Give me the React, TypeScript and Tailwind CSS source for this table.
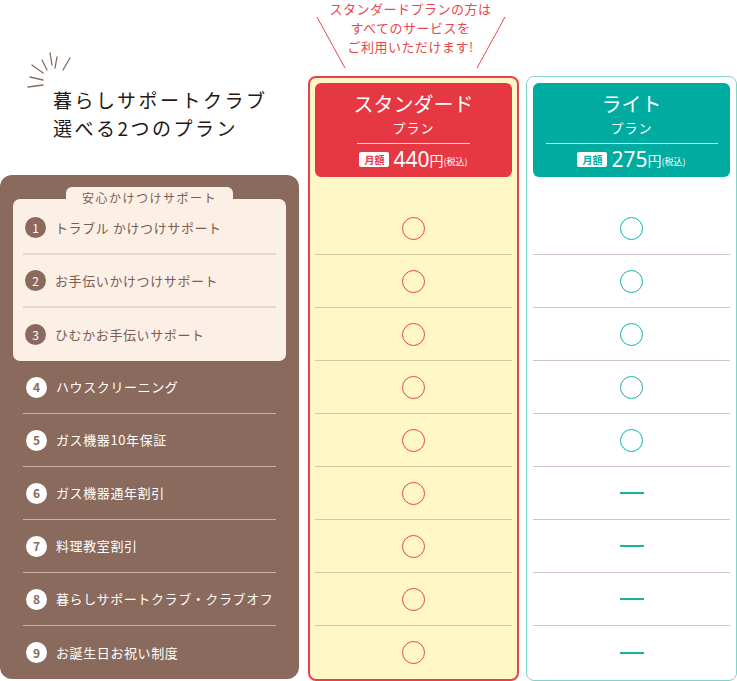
import React from "react";

const jp = { fontFamily: '"Noto Sans CJK JP", "Noto Sans", sans-serif' };

const services = [
    "トラブル かけつけサポート",
    "お手伝いかけつけサポート",
    "ひむかお手伝いサポート",
    "ハウスクリーニング",
    "ガス機器10年保証",
    "ガス機器通年割引",
    "料理教室割引",
    "暮らしサポートクラブ・クラブオフ",
    "お誕生日お祝い制度",
];

// light plan covers the first five services
const lightHas = [true, true, true, true, true, false, false, false, false];

function Sparkle() {
    return (
        <svg className="absolute left-[26px] top-[50px]" width="50" height="42" viewBox="0 0 50 42" fill="none" stroke="#8a6a5c" strokeWidth="1.3" strokeLinecap="round">
            <line x1="24" y1="3" x2="26" y2="15" />
            <line x1="16" y1="10" x2="21" y2="20" />
            <line x1="31" y1="7" x2="29" y2="18" />
            <line x1="44" y1="8" x2="37" y2="20" />
            <line x1="6" y1="15" x2="17" y2="23" />
            <line x1="4" y1="27" x2="17" y2="30" />
            <line x1="2" y1="37" x2="17" y2="35" />
        </svg>
    );
}

function Num({ n, dark }: { n: number; dark: boolean }) {
    return (
        <span
            className={
                dark
                    ? "w-[21px] h-[21px] rounded-full bg-[#8a6a5c] text-white text-[12px] flex items-center justify-center shrink-0"
                    : "w-[21px] h-[21px] rounded-full bg-white text-[#8a6a5c] text-[12px] font-bold flex items-center justify-center shrink-0"
            }
        >
            {n}
        </span>
    );
}

function PlanHeader({ name, price, bg, text }: { name: string; price: string; bg: string; text: string }) {
    return (
        <div className={`h-[94px] rounded-[6px] flex flex-col items-center pt-[9px] text-white ${bg}`}>
            <div className="text-[20px] leading-[24px]">{name}</div>
            <div className="text-[13px] leading-[20px] mt-[2px] tracking-[1px]">プラン</div>
            <div className={`h-px bg-white/80 mt-[5px] ${name === "ライト" ? "w-[172px]" : "w-[113px]"}`} />
            <div className="flex items-end mt-[6px] h-[18px]">
                <span className={`bg-white text-[10px] font-bold leading-[15px] h-[15px] px-[5px] rounded-[2px] self-center ${text}`}>月額</span>
                <span className="text-[21px] leading-[18px] ml-[4px]" style={{ fontFamily: '"Noto Sans", sans-serif' }}>{price}</span>
                <span className="text-[14px] leading-[15px]">円</span>
                <span className="text-[9px] leading-[13px]">(税込)</span>
            </div>
        </div>
    );
}

export default function App() {
    return (
        <div className="w-[737px] h-[681px] bg-white flex overflow-hidden" style={jp}>
            {/* left: title + service list */}
            <div className="w-[299px] shrink-0 flex flex-col">
                <div className="relative h-[175px] pl-[53px] pt-[86px]">
                    <Sparkle />
                    <div className="text-[19px] leading-[28px] tracking-[2.5px] text-[#231815]">暮らしサポートクラブ</div>
                    <div className="text-[19px] leading-[28px] tracking-[2.5px] text-[#231815]">選べる2つのプラン</div>
                </div>
                <div className="h-[504px] bg-[#8a6a5c] rounded-[12px] pt-[24px] px-[13px]">
                    <div className="relative bg-[#fcefe6] rounded-[7px] pt-[3px] px-[10px]">
                        <div className="absolute left-[53px] top-[-12px] w-[167px] h-[22px] bg-[#fcefe6] rounded-t-[6px] flex items-center justify-center text-[12px] tracking-[1.5px] text-[#7a5e52]">
                            安心かけつけサポート
                        </div>
                        {services.slice(0, 3).map((s, i) => (
                            <div key={s} className={`h-[53px] flex items-center gap-[9px] pl-[2px] ${i < 2 ? "border-b-2 border-[#e8d6cb]" : ""}`}>
                                <Num n={i + 1} dark />
                                <span className="text-[13px] tracking-[0.6px] whitespace-nowrap text-[#7a5e52]">{s}</span>
                            </div>
                        ))}
                    </div>
                    <div className="px-[10px]">
                        {services.slice(3).map((s, i) => (
                            <div key={s} className={`h-[53px] flex items-center gap-[9px] pl-[3px] ${i < 5 ? "border-b border-[#c9b3a9]" : ""}`}>
                                <Num n={i + 4} dark={false} />
                                <span className="text-[13px] tracking-[0.6px] whitespace-nowrap text-white">{s}</span>
                            </div>
                        ))}
                    </div>
                </div>
            </div>

            {/* standard plan */}
            <div className="w-[211px] shrink-0 ml-[9px] flex flex-col">
                <div className="relative h-[76px]">
                    <svg className="absolute left-0 top-0" width="211" height="76" fill="none" stroke="#e8474e" strokeWidth="1">
                        <line x1="9" y1="17" x2="37" y2="68" />
                        <line x1="197" y1="17" x2="169" y2="68" />
                    </svg>
                    <div className="text-center text-[13px] leading-[19px] tracking-[0.5px] text-[#e8474e] -mt-[1px] pr-[6px]">
                        スタンダードプランの方は
                        <br />
                        すべてのサービスを
                        <br />
                        ご利用いただけます!
                    </div>
                </div>
                <div className="h-[605px] border-2 border-[#e8414b] rounded-[8px] bg-[#fff8c6] px-[5px] pt-[5px]">
                    <PlanHeader name="スタンダード" price="440" bg="bg-[#e63843]" text="text-[#e63843]" />
                    <div className="mt-[25px]">
                        {services.map((s, i) => (
                            <div key={s} className={`h-[53px] flex items-center justify-center ${i < 8 ? "border-b border-[#d8c8a2]" : ""}`}>
                                <span className="w-[23px] h-[23px] rounded-full border-[1.5px] border-[#e8414b]" />
                            </div>
                        ))}
                    </div>
                </div>
            </div>

            {/* light plan */}
            <div className="w-[211px] shrink-0 ml-[7px] flex flex-col">
                <div className="h-[76px]" />
                <div className="h-[605px] border border-[#7fd4cb] rounded-[8px] bg-white px-[6px] pt-[6px]">
                    <PlanHeader name="ライト" price="275" bg="bg-[#00ab9f]" text="text-[#00ab9f]" />
                    <div className="mt-[25px]">
                        {lightHas.map((has, i) => (
                            <div key={i} className={`h-[53px] flex items-center justify-center ${i < 8 ? "border-b border-[#d3c4bf]" : ""}`}>
                                {has ? (
                                    <span className="w-[23px] h-[23px] rounded-full border-[1.5px] border-[#14b1a5]" />
                                ) : (
                                    <span className="w-[24px] h-[2px] bg-[#14b1a5]" />
                                )}
                            </div>
                        ))}
                    </div>
                </div>
            </div>
        </div>
    );
}
